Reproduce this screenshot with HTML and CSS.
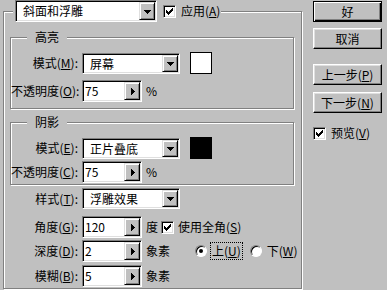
FILE: index.html
```html
<!DOCTYPE html>
<html lang="zh-CN">
<head>
    <meta charset="UTF-8">
    <title>斜面和浮雕</title>
    <link rel="stylesheet" href="styles.css">
</head>
<body>
<div class="dialog">
    <div class="frame">
        <div class="frame-head">
            <div class="combo wide"><span class="combo-text">斜面和浮雕</span><span class="drop"><svg width="7" height="4"><path d="M0 0h7v1h-1v1h-1v1h-1v1h-1v-1h-1v-1h-1v-1h-1z"/></svg></span></div>
            <span class="check"><svg width="7" height="7"><path d="M0 2h1v1h1v1h1v-1h1v-1h1v-1h1v-1h1v3h-1v1h-1v1h-1v1h-1v1h-1v-1h-1v-1h-1z"/></svg></span>
            <span class="head-label">应用(<u>A</u>)</span>
        </div>

        <div class="group first">
            <div class="group-title">高亮</div>
            <div class="row combo-row">
                <span class="label">模式(<u>M</u>):</span>
                <div class="combo"><span class="combo-text">屏幕</span><span class="drop"><svg width="7" height="4"><path d="M0 0h7v1h-1v1h-1v1h-1v1h-1v-1h-1v-1h-1v-1h-1z"/></svg></span></div>
                <span class="swatch white"></span>
            </div>
            <div class="row hl-opacity">
                <span class="label">不透明度(<u>O</u>):</span>
                <div class="spin"><span class="spin-text">75</span><span class="step"><svg width="4" height="7"><path d="M0 0v7h1v-1h1v-1h1v-1h1v-1h-1v-1h-1v-1h-1v-1z"/></svg></span></div>
                <span class="unit">%</span>
            </div>
        </div>

        <div class="group second">
            <div class="group-title">阴影</div>
            <div class="row combo-row">
                <span class="label">模式(<u>E</u>):</span>
                <div class="combo"><span class="combo-text">正片叠底</span><span class="drop"><svg width="7" height="4"><path d="M0 0h7v1h-1v1h-1v1h-1v1h-1v-1h-1v-1h-1v-1h-1z"/></svg></span></div>
                <span class="swatch black"></span>
            </div>
            <div class="row sh-opacity">
                <span class="label">不透明度(<u>C</u>):</span>
                <div class="spin"><span class="spin-text">75</span><span class="step"><svg width="4" height="7"><path d="M0 0v7h1v-1h1v-1h1v-1h1v-1h-1v-1h-1v-1h-1v-1z"/></svg></span></div>
                <span class="unit">%</span>
            </div>
        </div>

        <div class="row style-row">
            <span class="label">样式(<u>T</u>):</span>
            <div class="combo"><span class="combo-text">浮雕效果</span><span class="drop"><svg width="7" height="4"><path d="M0 0h7v1h-1v1h-1v1h-1v1h-1v-1h-1v-1h-1v-1h-1z"/></svg></span></div>
        </div>
        <div class="row angle-row">
            <span class="label">角度(<u>G</u>):</span>
            <div class="spin"><span class="spin-text">120</span><span class="step"><svg width="4" height="7"><path d="M0 0v7h1v-1h1v-1h1v-1h1v-1h-1v-1h-1v-1h-1v-1z"/></svg></span></div>
            <span class="unit">度</span>
            <span class="check"><svg width="7" height="7"><path d="M0 2h1v1h1v1h1v-1h1v-1h1v-1h1v-1h1v3h-1v1h-1v1h-1v1h-1v1h-1v-1h-1v-1h-1z"/></svg></span>
            <span class="check-label">使用全角(<u>S</u>)</span>
        </div>
        <div class="row depth-row">
            <span class="label">深度(<u>D</u>):</span>
            <div class="spin"><span class="spin-text">2</span><span class="step"><svg width="4" height="7"><path d="M0 0v7h1v-1h1v-1h1v-1h1v-1h-1v-1h-1v-1h-1v-1z"/></svg></span></div>
            <span class="unit">象素</span>
            <span class="radio on"></span>
            <span class="radio-label focus">上(<u>U</u>)</span>
            <span class="radio"></span>
            <span class="radio-label">下(<u>W</u>)</span>
        </div>
        <div class="row blur-row">
            <span class="label">模糊(<u>B</u>):</span>
            <div class="spin"><span class="spin-text">5</span><span class="step"><svg width="4" height="7"><path d="M0 0v7h1v-1h1v-1h1v-1h1v-1h-1v-1h-1v-1h-1v-1z"/></svg></span></div>
            <span class="unit">象素</span>
        </div>
    </div>

    <div class="buttons">
        <div class="btn default">好</div>
        <div class="btn cancel">取消</div>
        <div class="btn prev">上一步(<u>P</u>)</div>
        <div class="btn next">下一步(<u>N</u>)</div>
        <div class="preview">
            <span class="check"><svg width="7" height="7"><path d="M0 2h1v1h1v1h1v-1h1v-1h1v-1h1v-1h1v3h-1v1h-1v1h-1v1h-1v1h-1v-1h-1v-1h-1z"/></svg></span>
            <span class="check-label">预览(<u>V</u>)</span>
        </div>
    </div>
</div>
</body>
</html>
```

FILE: styles.css
```css
* { box-sizing: border-box; margin: 0; padding: 0; }
body { width: 387px; height: 290px; overflow: hidden; background: #c0c0c0; color: #000; font: 12px/14px "Noto Sans CJK SC", "Liberation Sans", sans-serif; }
u { text-decoration: underline; text-underline-offset: 1px; }
svg { display: block; shape-rendering: crispEdges; }

.dialog { display: flex; align-items: flex-start; }

/* outer etched frame */
.frame { margin: 11px 0 0 3px; width: 299px; height: 278px; border: 1px solid #808080; box-shadow: inset 1px 1px #fff, 1px 1px #fff; }
.frame-head { display: flex; align-items: center; width: fit-content; height: 22px; margin: -12px 0 0 9px; padding: 0 1px 0 2px; background: #c0c0c0; }
.frame-head .check { margin-left: 6px; }
.head-label { margin-left: 5px; white-space: nowrap; }

/* inner groups */
.group { margin-left: 6px; width: 284px; border: 1px solid #808080; box-shadow: inset 1px 1px #fff, 1px 1px #fff; }
.group.first { margin-top: 15px; height: 72px; }
.group.second { margin-top: 13px; height: 63px; }
.group-title { width: fit-content; height: 14px; margin: -8px 0 0 16px; padding: 0 8px; background: #c0c0c0; }
.group .label { width: 67px; }
.group .combo-row { margin-top: 8px; }
.hl-opacity { margin-top: 6px; }
.sh-opacity { margin-top: 2px; }

.row { display: flex; align-items: center; }
.label { width: 74px; margin-right: 4px; text-align: right; white-space: nowrap; }
.style-row { margin-top: 3px; }
.angle-row { margin-top: 7px; }
.depth-row { margin-top: 2px; }
.blur-row { margin-top: 3px; }
.unit { margin-left: 4px; white-space: nowrap; }

/* combo box */
.combo { display: flex; align-items: stretch; width: 98px; height: 21px; padding: 1px; background: #fff; border: 1px solid; border-color: #808080 #fff #fff #808080; box-shadow: inset 1px 1px #000, inset -1px -1px #dfdfdf; }
.combo.wide { width: 142px; height: 22px; }
.combo-text { flex: 1; padding-left: 6px; line-height: 17px; white-space: nowrap; }
.drop, .step { display: flex; align-items: center; justify-content: center; width: 16px; background: #c0c0c0; border: 1px solid; border-color: #dfdfdf #000 #000 #dfdfdf; box-shadow: inset 1px 1px #fff, inset -1px -1px #808080; }
.drop svg { margin-top: 1px; }

/* spin field */
.spin { display: flex; align-items: stretch; width: 60px; height: 22px; padding: 1px; background: #fff; border: 1px solid; border-color: #808080 #fff #fff #808080; box-shadow: inset 1px 1px #000, inset -1px -1px #dfdfdf; }
.spin-text { flex: 1; padding-left: 1px; line-height: 18px; }
.step svg { margin-left: 1px; }

.swatch { width: 22px; height: 22px; margin-left: 10px; border: 1px solid #000; }
.swatch.white { background: #fff; }
.swatch.black { background: #000; }

/* checkbox and radio */
.check { display: flex; align-items: center; justify-content: center; flex: none; width: 13px; height: 13px; background: #fff; border: 1px solid; border-color: #808080 #fff #fff #808080; box-shadow: inset 1px 1px #000, inset -1px -1px #dfdfdf; }
.angle-row .check { margin-left: 3px; }
.check-label { margin-left: 4px; white-space: nowrap; }

.radio { position: relative; flex: none; width: 12px; height: 12px; border-radius: 50%; background: #fff; border: 1px solid; border-color: #808080 #fff #fff #808080; box-shadow: inset 1px 1px #000; }
.radio.on::after { content: ""; position: absolute; left: 3px; top: 3px; width: 4px; height: 4px; border-radius: 50%; background: #000; }
.depth-row .radio.on { margin-left: 25px; }
.radio-label { margin-left: 4px; padding: 1px; white-space: nowrap; }
.radio-label.focus { outline: 1px dotted #000; outline-offset: 0; }
.depth-row .radio-label + .radio { margin-left: 8px; }

/* right column buttons */
.buttons { display: flex; flex-direction: column; width: 69px; margin-left: 11px; }
.btn { display: flex; align-items: center; justify-content: center; height: 21px; border: 1px solid; border-color: #fff #000 #000 #fff; box-shadow: inset -1px -1px #808080, inset 1px 1px #dfdfdf; white-space: nowrap; }
.btn.default { margin-top: 1px; border-color: #000; box-shadow: inset 1px 1px #fff, inset -1px -1px #000, inset -2px -2px #808080; }
.btn.cancel { margin-top: 6px; }
.btn.prev { margin-top: 15px; }
.btn.next { margin-top: 7px; }
.preview { display: flex; align-items: center; margin-top: 13px; }
.preview .check-label { margin-left: 5px; }
```
